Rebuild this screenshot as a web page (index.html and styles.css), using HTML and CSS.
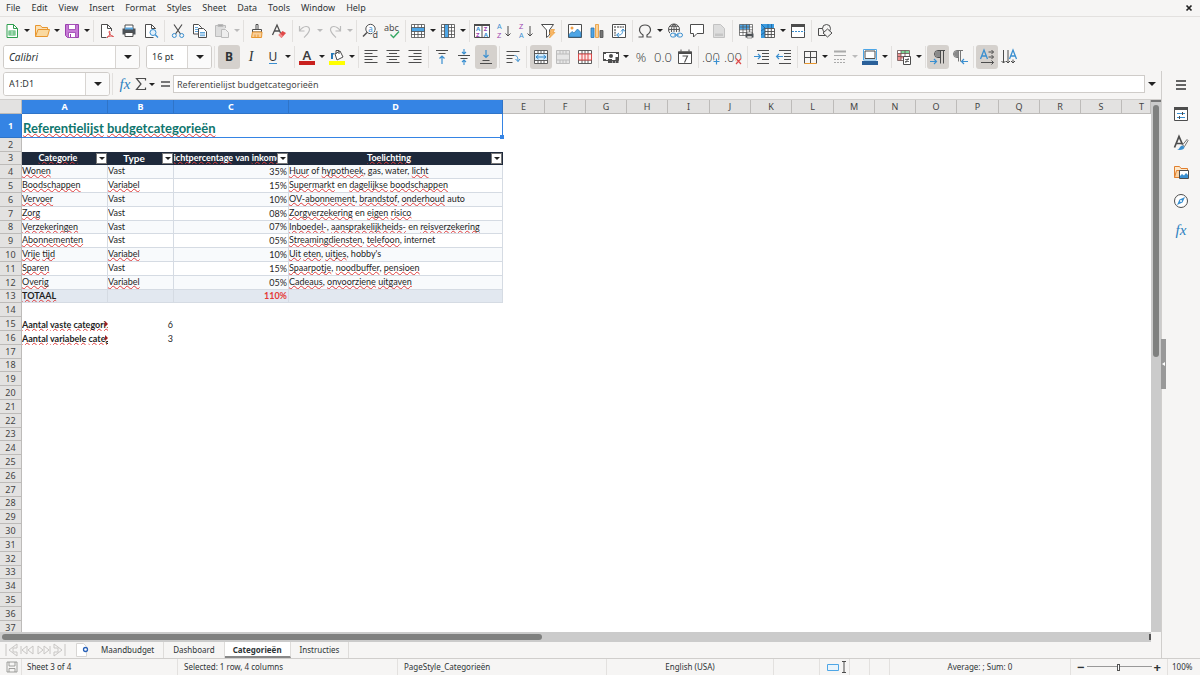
FILE: index.html
```html
<!DOCTYPE html>
<html lang="nl">
<head>
<meta charset="utf-8">
<title>Categorieën</title>
<link rel="stylesheet" href="styles.css">
</head>
<body>
<header class="menubar">
  <nav class="menus">
    <button>File</button><button>Edit</button><button>View</button><button>Insert</button><button>Format</button><button>Styles</button><button>Sheet</button><button>Data</button><button>Tools</button><button>Window</button><button>Help</button>
  </nav>
  <button class="close" aria-label="Close"><svg viewBox="0 0 8 8" width="8" height="8"><path d="M1.5 1.5l5 5M6.5 1.5l-5 5" stroke="#222" stroke-width="1.7"/></svg></button>
</header>

<div class="toolbar standard" role="toolbar" aria-label="Standard">
  <button class="tb" aria-label="New"><svg viewBox="0 0 16 16"><path d="M3 1.5h6.5l4 4v9H3z" fill="#fff" stroke="#2f9e4f"/><path d="M9.5 1.5v4h4" fill="none" stroke="#2f9e4f"/><path d="M4.500 7.500h7v5h-7z" fill="#3fae60"/><path d="M5 9h6M5 11h6M8 8v4" stroke="#d8f3df" stroke-width=".8"/></svg></button><button class="dd" aria-label="New options"></button>
  <button class="tb" aria-label="Open"><svg viewBox="0 0 16 16"><path d="M1.500 13.500v-11h5l1.500 2h5.500v2" fill="#fbe0b4" stroke="#e8962e"/><path d="M1.500 13.500l2.500-7h11.500l-2 7z" fill="#fad9a0" stroke="#e8962e"/></svg></button><button class="dd" aria-label="Open options"></button>
  <button class="tb" aria-label="Save"><svg viewBox="0 0 16 16"><path d="M1.500 1.500h13v13h-11l-2-2z" fill="#c77bd6" stroke="#9a3fae"/><path d="M4.500 1.500h7v5h-7zM4.500 14.500v-5h7v5z" fill="#fff" stroke="#9a3fae" stroke-width=".8"/><path d="M6.500 11v3" stroke="#9a3fae"/></svg></button><button class="dd" aria-label="Save options"></button>
  <i class="sep"></i>
  <button class="tb" aria-label="Export PDF"><svg viewBox="0 0 16 16"><path d="M12.500 8V5.500l-4-4h-6v13h5" fill="#fff" stroke="#4d4d4d"/><path d="M8.500 1.500v4h4" fill="none" stroke="#4d4d4d"/><path d="M8 14.500c3-2 3.500-5 2.500-6.500-1.500 1 1 5 4 5.500-2-1-5-.5-6.500 1z" fill="none" stroke="#dc4a4a"/></svg></button>
  <button class="tb" aria-label="Print"><svg viewBox="0 0 16 16"><path d="M4 6V2h8v4" fill="#fff" stroke="#4d4d4d"/><path d="M1.500 5.500h13v6h-13z" fill="#4d5358"/><path d="M4 4.500h8v2H4z" fill="#5aa7df"/><path d="M4 9.500h8v4H4z" fill="#fff" stroke="#4d4d4d"/></svg></button>
  <button class="tb" aria-label="Print preview"><svg viewBox="0 0 16 16"><path d="M12.500 6V5.500l-4-4h-6v13h8" fill="#fff" stroke="#4d4d4d"/><path d="M8.500 1.500v4h4" fill="none" stroke="#4d4d4d"/><circle cx="10" cy="9.500" r="3" fill="#e3f1fb" stroke="#3a8fd0"/><path d="M12.300 11.800l2.700 2.700" stroke="#3a8fd0" stroke-width="1.300"/></svg></button>
  <i class="sep"></i>
  <button class="tb" aria-label="Cut"><svg viewBox="0 0 16 16" fill="none"><path d="M4 1.500l6.500 9.500M12 1.500L5.500 11" stroke="#4d4d4d" stroke-width="1.200"/><circle cx="4.300" cy="12.500" r="2" stroke="#3a8fd0"/><circle cx="11.700" cy="12.500" r="2" stroke="#3a8fd0"/></svg></button>
  <button class="tb" aria-label="Copy"><svg viewBox="0 0 16 16" fill="#fff" stroke="#4d4d4d"><path d="M1.500 1.500h5l3 3v6.500h-8z"/><path d="M6.500 5.500h5l3 3v6h-8z"/><path d="M3 4.500h3M3 6.500h3M3 8.500h3M8 9.500h5M8 11h5M8 12.700h5" stroke="#3a8fd0" stroke-width=".8"/></svg></button>
  <button class="tb off" aria-label="Paste"><svg viewBox="0 0 16 16" fill="#ddd" stroke="#bcbcbc"><path d="M7 13.500H1.500v-11h10V5"/><path d="M4 1.500h5v2H4z" fill="#aaa"/><path d="M7.500 6.500h4l3 3v5h-7z" fill="#eee"/></svg></button><button class="dd off" aria-label="Paste options"></button>
  <i class="sep"></i>
  <button class="tb" aria-label="Clone formatting"><svg viewBox="0 0 16 16"><path d="M7 1.500h2v5H7z" fill="#fff" stroke="#4d4d4d"/><path d="M3.500 6.500h9v2.500h-9z" fill="#fff" stroke="#4d4d4d"/><path d="M3.500 9l-1 5.500h10l.5-5.500z" fill="#f9cf9a" stroke="#e8962e"/><path d="M6 14v-2.500M9 14v-2.500" stroke="#e8962e"/></svg></button>
  <button class="tb" aria-label="Clear formatting"><svg viewBox="0 0 16 16"><path d="M1.500 12L6 2l3.500 8M3.500 8h5" fill="none" stroke="#4d4d4d" stroke-width="1.300"/><path d="M7.500 12l4-4 3.500 2-4.500 5z" fill="#e04848"/><path d="M7.500 12l1.500-1.500 3 2.500-1.500 2z" fill="#f08d8d"/></svg></button>
  <i class="sep tight"></i>
  <button class="tb off" aria-label="Undo"><svg viewBox="0 0 16 16" fill="none" stroke="#bcbcbc" stroke-width="1.200"><path d="M2.500 3v5h5M2.500 8c4-6 10-5.500 10-1.500 0 3-2.500 5-5.500 8"/></svg></button><button class="dd off" aria-label="Undo list"></button>
  <button class="tb off" aria-label="Redo"><svg viewBox="0 0 16 16" fill="none" stroke="#bcbcbc" stroke-width="1.200"><path d="M13.500 3v5h-5M13.500 8c-4-6-10-5.500-10-1.500 0 3 2.500 5 5.500 8"/></svg></button><button class="dd off" aria-label="Redo list"></button>
  <i class="sep"></i>
  <button class="tb" aria-label="Find and replace"><svg viewBox="0 0 16 16"><circle cx="8.500" cy="6" r="4.700" fill="#fff" stroke="#4d4d4d"/><path d="M5 9.500L1 13.500" stroke="#4d4d4d" stroke-width="1.500"/><text x="6.200" y="8.500" font-size="8" fill="#3a8fd0">a</text><text x="10.500" y="15" font-size="9" fill="#4d4d4d" stroke="#f6f5f4" stroke-width="2" paint-order="stroke">d</text></svg></button>
  <button class="tb" aria-label="Spelling"><svg viewBox="0 0 16 16"><text x="0" y="8" font-size="9" fill="#4d4d4d">abc</text><path d="M6.500 11.500l3 3 5.500-6" fill="none" stroke="#35a864" stroke-width="1.400"/></svg></button>
  <i class="sep tight"></i>
  <button class="tb" aria-label="Row"><svg viewBox="0 0 16 16"><path d="M1.500 1.500h13v13h-13z" fill="#fff"/><path d="M1 4.500h14v4H1z" fill="#4ea6e6"/><path d="M1.500 1.500h13v13h-13zM1.500 4.500h13M1.500 8.500h13M1.500 11.500h13M4.500 1.500v3M8 1.500v3M11.500 1.500v3M4.500 8.500v6M8 8.500v6M11.500 8.500v6" fill="none" stroke="#4d4d4d" stroke-width=".8"/></svg></button><button class="dd" aria-label="Row options"></button>
  <button class="tb" aria-label="Column"><svg viewBox="0 0 16 16"><path d="M1.500 1.500h13v13h-13z" fill="#fff"/><path d="M4.500 1h4v14h-4z" fill="#4ea6e6"/><path d="M1.500 1.500h13v13h-13zM4.500 1.500v13M8.500 1.500v13M11.500 1.500v13M1.500 4.500h3M1.500 8h3M1.500 11.500h3M8.500 4.500h6M8.500 8h6M8.500 11.500h6" fill="none" stroke="#4d4d4d" stroke-width=".8"/></svg></button><button class="dd" aria-label="Column options"></button>
  <i class="sep tight"></i>
  <button class="tb" aria-label="Sort"><svg viewBox="0 0 16 16"><path d="M.5 1.500h15v13H.5zM8 1.500v13" fill="#fff" stroke="#4d4d4d"/><path d="M0 1h16v2H0z" fill="#4d4d4d"/><g font-size="6" font-weight="700"><text x="2" y="8" fill="#3a8fd0">A</text><text x="2" y="14" fill="#9a3fae">Z</text><text x="9.700" y="8" fill="#9a3fae">Z</text><text x="9.700" y="14" fill="#3a8fd0">A</text></g></svg></button>
  <button class="tb" aria-label="Sort ascending"><svg viewBox="0 0 16 16" class="az"><text x="1" y="6" fill="#3a8fd0">A</text><text x="1" y="15" fill="#9a3fae">Z</text><path d="M12 3v10M9.500 10.500L12 13l2.500-2.500" fill="none" stroke="#4d4d4d"/></svg></button>
  <button class="tb" aria-label="Sort descending"><svg viewBox="0 0 16 16" class="az"><text x="1" y="6" fill="#9a3fae">Z</text><text x="1" y="15" fill="#3a8fd0">A</text><path d="M12 3v10M9.500 10.500L12 13l2.500-2.500" fill="none" stroke="#4d4d4d"/></svg></button>
  <button class="tb" aria-label="AutoFilter"><svg viewBox="0 0 16 16"><path d="M1.500 1.500h12L9.500 7v5l-3 2.500V7z" fill="#fff" stroke="#4d4d4d"/><path d="M11 6.500h3.500l-1.500 3h2L9.500 15l1.500-4.500H9.500z" fill="#f9b868" stroke="#e8962e" stroke-width=".6"/></svg></button>
  <i class="sep"></i>
  <button class="tb" aria-label="Image"><svg viewBox="0 0 16 16"><path d="M1.500 1.500h13v13h-13z" fill="#fff" stroke="#4d4d4d"/><circle cx="5" cy="5" r="1.500" fill="#f0a04a"/><path d="M2 14v-2.500l3-3 2 1.500 3.500-4 3.500 3.500V14z" fill="#4ea6e6" stroke="#2b72ad" stroke-width=".7"/></svg></button>
  <button class="tb" aria-label="Chart"><svg viewBox="0 0 16 16"><path d="M2 5h3v9.500H2z" fill="#4ea6e6" stroke="#2b72ad" stroke-width=".8"/><path d="M6.500 1.500h3v13h-3z" fill="#fad29a" stroke="#e8962e" stroke-width=".8"/><path d="M11 7.500h3v7h-3z" fill="#777" stroke="#4d4d4d" stroke-width=".8"/></svg></button>
  <button class="tb" aria-label="Pivot table"><svg viewBox="0 0 16 16"><path d="M1.500 1.500h13v13h-13z" fill="#fff" stroke="#4d4d4d"/><path d="M3 4h2M6 4h7M4 6v7" stroke="#777" stroke-width="1.500" stroke-dasharray="2 .7"/><path d="M6 12c4 .5 5.500-1 6-5M10 8.500L12 6l2 2.500M8 10l-2.500 2L8 14" fill="none" stroke="#3a8fd0"/></svg></button>
  <i class="sep tight"></i>
  <button class="tb" aria-label="Special character"><svg viewBox="0 0 16 16"><path d="M1.500 14h4.500v-2C0 8 2.500 2 8 2s8 6 2 10v2h4.500" fill="none" stroke="#4d4d4d" stroke-width="1.200"/></svg></button><button class="dd" aria-label="Symbols"></button>
  <button class="tb" aria-label="Hyperlink"><svg viewBox="0 0 16 16" fill="none"><circle cx="7" cy="6.500" r="5.500" stroke="#4d4d4d"/><path d="M1.500 6.500h11M7 1v11M3 3.300h8M4.500 10V6.500C4.500 4 5.500 2 7 1c1.500 1 2.500 3 2.500 5.500V10" stroke="#4d4d4d" stroke-width=".9"/><path d="M3 9h13v6H3z" fill="#f6f5f4"/><rect x="3.500" y="10.200" width="5.500" height="3.800" rx="1.900" stroke="#3a8fd0"/><rect x="10" y="10.200" width="5.500" height="3.800" rx="1.900" stroke="#3a8fd0"/><path d="M7 12h5" stroke="#3a8fd0"/></svg></button>
  <button class="tb" aria-label="Comment"><svg viewBox="0 0 16 16"><path d="M1.500 1.500h13v9H8l-3.500 3.500v-3.500h-3z" fill="#fff" stroke="#4d4d4d"/></svg></button>
  <button class="tb off" aria-label="Headers and footers"><svg viewBox="0 0 16 16"><path d="M2.500 1.500h7l4 4v9h-11z" fill="#ddd" stroke="#c2c2c2"/><path d="M4 10.500h8V13H4z" fill="#c6c6c6"/></svg></button>
  <i class="sep"></i>
  <button class="tb" aria-label="Print area"><svg viewBox="0 0 16 16"><path d="M1.500 1.500h13v12h-13z" fill="#fff"/><path d="M1.500 1.500h10v5h-10z" fill="#4ea6e6"/><path d="M1.500 1.500h13v11h-13zM1.500 4h13M1.500 6.800h13M1.500 9.500h13M5 1.500v11M8.500 1.500v11M11.500 1.500v11" fill="none" stroke="#4d4d4d" stroke-width=".7"/><path d="M7.500 10.500h8v4h-8z" fill="#4d5358"/><path d="M9 9h5v2H9zM9 13h5v2H9z" fill="#fff" stroke="#4d4d4d" stroke-width=".6"/></svg></button>
  <button class="tb" aria-label="Freeze rows and columns"><svg viewBox="0 0 16 16"><path d="M1.500 1.500h13v13h-13z" fill="#fff"/><path d="M1 1h13v4H1zM1 1h4v14H1z" fill="#3a9be0"/><path d="M5 5.500h9.500v9H5zM5 8.500h9.500M5 11.500h9.500M8 5.500v9M11.300 5.500v9" fill="none" stroke="#4d4d4d" stroke-width=".9"/><path d="M1 1l4 4M1 8l4-3M1 12l4-3M8 1v4M11.500 1v4" stroke="#1f5f96" stroke-width=".8"/></svg></button><button class="dd" aria-label="Freeze options"></button>
  <button class="tb" aria-label="Split window"><svg viewBox="0 0 16 16"><path d="M1.500 1.500h13v13h-13z" fill="#fff" stroke="#4d4d4d"/><path d="M1 1h14v3H1z" fill="#4d4d4d"/><path d="M2 8.500h13" stroke="#3a8fd0" stroke-dasharray="2 1"/></svg></button>
  <i class="sep"></i>
  <button class="tb" aria-label="Draw functions"><svg viewBox="0 0 16 16" fill="#f6f5f4" stroke="#4d4d4d"><path d="M1.500 5.500h7v7h-7z"/><circle cx="9.500" cy="5.500" r="4"/><path d="M10.500 6l4.500 4-4.500 4L6 10z"/></svg></button>
</div>

<div class="toolbar formatting" role="toolbar" aria-label="Formatting">
  <div class="combo fontname"><input aria-label="Font name" value="Calibri"><button aria-label="Font list"></button></div>
  <div class="combo fontsize"><input aria-label="Font size" value="16 pt"><button aria-label="Size list"></button></div>
  <i class="sep wide"></i>
  <button class="tb on bold">B</button>
  <button class="tb italic">I</button>
  <button class="tb under" aria-label="Underline"><span>U</span></button><button class="dd" aria-label="Underline styles"></button>
  <i class="sep tight"></i>
  <button class="tb" aria-label="Font colour"><svg viewBox="0 0 16 16"><text x="3.500" y="10.500" font-size="13" fill="#3c3c3c" font-weight="600">A</text><path d="M0 12h16v4H0z" fill="#c9211e"/></svg></button><button class="dd" aria-label="Font colour list"></button>
  <button class="tb" aria-label="Background colour"><svg viewBox="0 0 16 16"><path d="M6 5l5-3 3 6-6 3z" fill="#fff" stroke="#4d4d4d"/><path d="M7 5V1.500h3V5" fill="none" stroke="#4d4d4d"/><path d="M2 10V4h4l-2 2v4z" fill="#2478b8"/><path d="M0 12h16v4H0z" fill="#ffff00"/></svg></button><button class="dd" aria-label="Background colour list"></button>
  <i class="sep tight"></i>
  <button class="tb" aria-label="Align left"><svg viewBox="0 0 16 16"><path d="M1.500 1.500h13M1.500 4.500h8M1.500 7.500h13M1.500 10.500h8M1.500 13.500h13" stroke="#4d4d4d"/></svg></button>
  <button class="tb" aria-label="Centre"><svg viewBox="0 0 16 16"><path d="M1.500 1.500h13M4 4.500h8M1.500 7.500h13M4 10.500h8M1.500 13.500h13" stroke="#4d4d4d"/></svg></button>
  <button class="tb" aria-label="Align right"><svg viewBox="0 0 16 16"><path d="M1.500 1.500h13M6.500 4.500h8M1.500 7.500h13M6.500 10.500h8M1.500 13.500h13" stroke="#4d4d4d"/></svg></button>
  <i class="sep"></i>
  <button class="tb" aria-label="Align top"><svg viewBox="0 0 16 16" fill="none"><path d="M2 1.500h12M4.500 4.500h7" stroke="#4d4d4d"/><path d="M8 15V7M5.500 9.500L8 7l2.500 2.500" stroke="#3a8fd0" stroke-width="1.200"/></svg></button>
  <button class="tb" aria-label="Centre vertically"><svg viewBox="0 0 16 16" fill="none"><path d="M2 6.500h12M4.500 9.500h7" stroke="#4d4d4d"/><path d="M8 0v5M6 3l2 2 2-2M8 16v-5M6 13l2-2 2 2" stroke="#3a8fd0" stroke-width="1.100"/></svg></button>
  <button class="tb on" aria-label="Align bottom"><svg viewBox="0 0 16 16" fill="none"><path d="M4.500 11.500h7M2 14.500h12" stroke="#4d4d4d"/><path d="M8 1v7.500M5.500 6L8 8.500 10.500 6" stroke="#3a8fd0" stroke-width="1.200"/></svg></button>
  <i class="sep"></i>
  <button class="tb" aria-label="Wrap text"><svg viewBox="0 0 16 16" fill="none"><path d="M1.500 2.500h13M1.500 6.500h8M1.500 9.500h6M1.500 13.500h6" stroke="#4d4d4d"/><path d="M9.500 6.500c2.500 0 3.500 1.500 3.500 6M10.500 10l2.500 2.500 2-2.500" stroke="#3a8fd0"/></svg></button>
  <i class="sep wide"></i>
  <button class="tb on" aria-label="Merge and centre"><svg viewBox="0 0 16 16"><path d="M1.500 1.500h13v13h-13z" fill="#fff"/><path d="M1.500 1.500h13v13h-13zM1.500 4.500h13M1.500 11.500h13M5 1.500v3M8 1.500v3M11 1.500v3M5 11.500v3M8 11.500v3M11 11.500v3" fill="none" stroke="#4d4d4d" stroke-width=".9"/><path d="M2 5h12v6H2z" fill="#d5ebfa"/><path d="M3 8h10M5.500 6L3 8l2.500 2M10.500 6L13 8l-2.500 2" fill="none" stroke="#2b86cc"/></svg></button>
  <button class="tb off" aria-label="Merge cells"><svg viewBox="0 0 16 16" fill="#e6e6e6" stroke="#bcbcbc"><path d="M1.500 1.500h13v13h-13zM1.500 5h13M1.500 11h13M5 1.500V5M8 1.500V5M11 1.500V5M5 11v3.500M8 11v3.500M11 11v3.500"/></svg></button>
  <button class="tb" aria-label="Unmerge cells"><svg viewBox="0 0 16 16"><path d="M1.500 1.500h13v13h-13zM1.500 5h13M1.500 11h13M5 1.500V5M8 1.500V5M11 1.500V5M5 11v3.500M8 11v3.500M11 11v3.500" fill="#fff" stroke="#4d4d4d" stroke-width=".9"/><path d="M1.500 5h13v6h-13zM5 5v6M8 5v6M11 5v6" fill="#fdeaea" stroke="#dc4a4a"/></svg></button>
  <i class="sep tight"></i>
  <button class="tb" aria-label="Currency"><svg viewBox="0 0 16 16"><path d="M.5 3.500h15v8H.5z" fill="#fff" stroke="#4d4d4d"/><path d="M0 3h3v2H0zM13 3h3v2h-3zM0 10h3v2H0z" fill="#4d4d4d"/><circle cx="8" cy="7" r="2" fill="#4d4d4d"/><path d="M5 10h4v4H5zM9.500 11h2.500v3H9.500zM12.500 8h3v6h-3z" fill="#4d4d4d"/></svg></button><button class="dd" aria-label="Currency list"></button>
  <button class="tb num">%</button>
  <button class="tb num" aria-label="Number">0.0</button>
  <button class="tb" aria-label="Date"><svg viewBox="0 0 16 16"><path d="M1.500 3h13v11.500h-13z" fill="#fff" stroke="#4d4d4d"/><path d="M1 2.500h14V5H1z" fill="#4d4d4d"/><path d="M4 .5v2M12 .5v2" stroke="#4d4d4d"/><path d="M5.500 7h5l-3 6.500" fill="none" stroke="#4d4d4d" stroke-width="1.100"/></svg></button>
  <i class="sep"></i>
  <button class="tb" aria-label="Add decimal"><svg viewBox="0 0 16 16"><text x="-2" y="13" class="thin">.00</text><path d="M12.500 9.500v6M9.500 12.500h6" stroke="#f6f5f4" stroke-width="3"/><path d="M12.500 9.500v6M9.500 12.500h6" stroke="#3a8fd0" stroke-width="1.200"/></svg></button>
  <button class="tb" aria-label="Delete decimal"><svg viewBox="0 0 16 16"><text x="-2" y="13" class="thin">.00</text><path d="M10 9.500l5 5.500M15 9.500L10 15" stroke="#f6f5f4" stroke-width="3"/><path d="M10 9.500l5 5.500M15 9.500L10 15" stroke="#dc4a4a" stroke-width="1.200"/></svg></button>
  <i class="sep wide"></i>
  <button class="tb" aria-label="Increase indent"><svg viewBox="0 0 16 16" fill="none"><path d="M3 1.500h12M8 4.500h7M8 7.500h7M8 10.500h7M3 14.500h12" stroke="#4d4d4d"/><path d="M0 7.500h6.500M4 5l2.500 2.500L4 10" stroke="#3a8fd0" stroke-width="1.100"/></svg></button>
  <button class="tb" aria-label="Decrease indent"><svg viewBox="0 0 16 16" fill="none"><path d="M3 1.500h12M8 4.500h7M8 7.500h7M8 10.500h7M3 14.500h12" stroke="#4d4d4d"/><path d="M.5 7.500H7M3 5L.5 7.500 3 10" stroke="#3a8fd0" stroke-width="1.100"/></svg></button>
  <i class="sep tight"></i>
  <button class="tb" aria-label="Borders"><svg viewBox="0 0 16 16"><path d="M2.500 2v12.500M14.500 2v12.500M8.500 2v12.500M2 2.500h13M2.500 8.500h12" fill="none" stroke="#4d4d4d"/><path d="M2.500 14.500h12" stroke="#e8962e"/></svg></button><button class="dd" aria-label="Border list"></button>
  <button class="tb off" aria-label="Border style"><svg viewBox="0 0 16 16" stroke="#aaa"><path d="M2 2.500h12" stroke-width="2"/><path d="M2 6.500h12"/><path d="M2 10.500h12M2 13.500h12" stroke-dasharray="2 1"/></svg></button><button class="dd off" aria-label="Border style list"></button>
  <button class="tb" aria-label="Border colour"><svg viewBox="0 0 16 16"><path d="M1.500 .5h13v10.500h-13z" fill="#fff" stroke="#4ea6e6"/><path d="M3 2h10v7.500H3z" fill="#fff" stroke="#4d4d4d"/><path d="M0 12h16v4H0z" fill="#2a6099"/></svg></button><button class="dd" aria-label="Border colour list"></button>
  <i class="sep tight"></i>
  <button class="tb" aria-label="Conditional formatting"><svg viewBox="0 0 16 16"><path d="M1.500 1.500h12v10h-12z" fill="#fff"/><path d="M5 1.500h8v3H5z" fill="#7fd99a"/><path d="M2 4.500h3v7H2zM5 7.500h5v2H5z" fill="#ef8f8f"/><path d="M1.500 1.500h12v10h-12zM1.500 4.500h12M1.500 7.500h12M5 1.500v10M9 1.500v10" fill="none" stroke="#6b5050" stroke-width=".8"/><path d="M7.500 7.500h7v8h-7z" fill="#fff" stroke="#4d4d4d"/><path d="M9 10.500h4M9 12.500h4M12.500 9l-3 5" stroke="#4d4d4d" stroke-width=".8"/></svg></button><button class="dd" aria-label="Conditional list"></button>
  <i class="sep tight"></i>
  <button class="tb on" aria-label="Left-to-right"><svg viewBox="0 0 16 16" fill="none"><path d="M15 1.500H8a3.500 3.500 0 000 7h2M10.500 1.500v13M13.500 1.500v13" stroke="#4d4d4d"/><path d="M10 2H8a3 3 0 000 6h2z" fill="#8a8a8a"/><path d="M0 12.500h6.500M4 10l2.500 2.500L4 15" stroke="#3a8fd0" stroke-width="1.200"/></svg></button>
  <button class="tb" aria-label="Right-to-left"><svg viewBox="0 0 16 16" fill="none"><path d="M11 1.500H5a3.500 3.500 0 000 7h2M6.500 1.500v11M8.500 1.500v11" stroke="#777"/><path d="M6.500 2H5a3 3 0 000 6h1.500z" fill="#8a8a8a"/><path d="M16 12.500h-6M12 10l-2.500 2.500L12 15" stroke="#3a8fd0" stroke-width="1.200"/></svg></button>
  <i class="sep"></i>
  <button class="tb on" aria-label="Horizontal text"><svg viewBox="0 0 16 16" fill="none"><path d="M1.500 10L5 1l3.500 9M2.700 7h4.600" stroke="#3a8fd0" stroke-width="1.300"/><path d="M9.500 3h5M9.500 8h5M12.500 1l2 2-2 2M12.500 6l2 2-2 2M2 13.500h12.500M12.500 11.500l2 2-2 2" stroke="#4d4d4d"/></svg></button>
  <button class="tb" aria-label="Vertical text"><svg viewBox="0 0 16 16" fill="none"><path d="M8.500 10L12 1l3.500 9M9.700 7h4.600" stroke="#3a8fd0" stroke-width="1.300"/><path d="M2.500 1v13M7 1v13M12 10.500V14M.5 12l2 2 2-2M5 12l2 2 2-2M10 12l2 2 2-2" stroke="#4d4d4d"/></svg></button>
</div>

<div class="workspace">
  <main class="document">
    <div class="formulabar">
      <div class="combo namebox"><input aria-label="Name box" value="A1:D1"><button aria-label="Name list"></button></div>
      <i class="sep wide"></i>
      <button class="fb fx" aria-label="Function wizard">fx</button>
      <button class="fb" aria-label="Sum"><svg viewBox="0 0 14 14" width="14" height="14"><path d="M11.500 3.500v-2h-9L7 7l-4.500 5.500h9v-2" fill="none" stroke="#4d4d4d" stroke-width="1.200"/></svg></button><button class="dd" aria-label="Sum options"></button>
      <button class="fb" aria-label="Formula"><svg viewBox="0 0 14 14" width="14" height="14"><path d="M3 5h9M3 9h9" stroke="#4d4d4d" stroke-width="1.600"/></svg></button>
      <input class="formula" aria-label="Formula input" value="Referentielijst budgetcategorieën">
      <button class="expand" aria-label="Expand formula bar"></button>
    </div>
    <div class="sheetwrap">
      <div class="sheet">
        <table class="grid">
          <colgroup><col class="rh"><col class="ca"><col class="cb"><col class="cc"><col class="cd"><col class="w"><col class="n"><col class="n"><col class="n"><col class="w"><col class="n"><col class="n"><col class="w"><col class="n"><col class="n"><col class="n"><col class="w"><col class="n"><col class="n"><col class="n"><col></colgroup>
          <thead><tr><th></th><th class="sel">A</th><th class="sel">B</th><th class="sel">C</th><th class="sel">D</th><th>E</th><th>F</th><th>G</th><th>H</th><th>I</th><th>J</th><th>K</th><th>L</th><th>M</th><th>N</th><th>O</th><th>P</th><th>Q</th><th>R</th><th>S</th><th class="last">T</th></tr></thead>
          <tbody>
            <tr class="title"><th class="sel">1</th><td colspan="4" class="cursor"><span class="sp">Referentielijst</span> <span class="sp">budgetcategorieën</span><i class="handle"></i></td></tr>
            <tr><th>2</th></tr>
            <tr class="head"><th>3</th>
              <td><div class="hc"><span class="sp">Categorie</span><button aria-label="Filter Categorie"></button></div></td>
              <td><div class="hc big"><span>Type</span><button aria-label="Filter Type"></button></div></td>
              <td><div class="hc clip"><span><span class="sp">Richtpercentage</span> van <span class="sp">inkomen</span></span><button aria-label="Filter percentage"></button></div></td>
              <td><div class="hc"><span class="sp">Toelichting</span><button aria-label="Filter Toelichting"></button></div></td></tr>
            <tr class="data alt"><th>4</th><td><span class="sp">Wonen</span></td><td>Vast</td><td class="r">35%</td><td><span class="sp">Huur</span> of <span class="sp">hypotheek</span>, gas, water, <span class="sp">licht</span></td></tr>
            <tr class="data"><th>5</th><td><span class="sp">Boodschappen</span></td><td><span class="sp">Variabel</span></td><td class="r">15%</td><td><span class="sp">Supermarkt</span> en <span class="sp">dagelijkse</span> <span class="sp">boodschappen</span></td></tr>
            <tr class="data alt"><th>6</th><td><span class="sp">Vervoer</span></td><td>Vast</td><td class="r">10%</td><td><span class="sp">OV-abonnement</span>, <span class="sp">brandstof</span>, <span class="sp">onderhoud</span> auto</td></tr>
            <tr class="data"><th>7</th><td><span class="sp">Zorg</span></td><td>Vast</td><td class="r">08%</td><td><span class="sp">Zorgverzekering</span> en <span class="sp">eigen</span> <span class="sp">risico</span></td></tr>
            <tr class="data alt"><th>8</th><td><span class="sp">Verzekeringen</span></td><td>Vast</td><td class="r">07%</td><td><span class="sp">Inboedel-</span>, <span class="sp">aansprakelijkheids-</span> en <span class="sp">reisverzekering</span></td></tr>
            <tr class="data"><th>9</th><td><span class="sp">Abonnementen</span></td><td>Vast</td><td class="r">05%</td><td><span class="sp">Streamingdiensten</span>, <span class="sp">telefoon</span>, internet</td></tr>
            <tr class="data alt"><th>10</th><td><span class="sp">Vrije</span> <span class="sp">tijd</span></td><td><span class="sp">Variabel</span></td><td class="r">10%</td><td><span class="sp">Uit</span> <span class="sp">eten</span>, <span class="sp">uitjes</span>, hobby's</td></tr>
            <tr class="data"><th>11</th><td><span class="sp">Sparen</span></td><td>Vast</td><td class="r">15%</td><td><span class="sp">Spaarpotje</span>, <span class="sp">noodbuffer</span>, <span class="sp">pensioen</span></td></tr>
            <tr class="data alt"><th>12</th><td><span class="sp">Overig</span></td><td><span class="sp">Variabel</span></td><td class="r">05%</td><td><span class="sp">Cadeaus</span>, <span class="sp">onvoorziene</span> <span class="sp">uitgaven</span></td></tr>
            <tr class="data total"><th>13</th><td><span class="sp">TOTAAL</span></td><td></td><td class="r">110%</td><td></td></tr>
            <tr><th>14</th></tr>
            <tr class="sum"><th>15</th><td class="more"><span class="sp">Aantal</span> <span class="sp">vaste</span> <span class="sp">categorieën</span></td><td class="r">6</td></tr>
            <tr class="sum"><th>16</th><td class="more"><span class="sp">Aantal</span> <span class="sp">variabele</span> <span class="sp">categorieën</span></td><td class="r">3</td></tr>
            <tr><th>17</th></tr><tr><th>18</th></tr><tr><th>19</th></tr><tr><th>20</th></tr><tr><th>21</th></tr><tr><th>22</th></tr><tr><th>23</th></tr><tr><th>24</th></tr><tr><th>25</th></tr><tr><th>26</th></tr><tr><th>27</th></tr><tr><th>28</th></tr><tr><th>29</th></tr><tr><th>30</th></tr><tr><th>31</th></tr><tr><th>32</th></tr><tr><th>33</th></tr><tr><th>34</th></tr><tr><th>35</th></tr><tr><th>36</th></tr><tr><th>37</th></tr>
          </tbody>
        </table>
      </div>
      <div class="vscroll"><div class="thumb"></div></div>
    </div>
    <div class="hscroll"><div class="thumb"></div><i class="tick"></i></div>
    <nav class="tabs">
      <svg class="tabnav" viewBox="0 0 62 14" width="62" height="14" fill="none" stroke="#c8c6c4"><path d="M1 1v12M12 1L4 7l8 6V9H8V5h4zM16 3v8M22 3l-5 4 5 4zM28 3l-5 4 5 4zM33 3l5 4-5 4zM39 3l5 4-5 4zM45 3v8M49 1l8 6-8 6V9h4V5h-4zM60 1v12"/></svg>
      <button class="addtab" aria-label="Add sheet"><svg viewBox="0 0 14 16" width="14" height="16"><path d="M1.500 1.500h7l3 3v10h-10z" fill="#fff" stroke="#d8d6d4"/><circle cx="10.500" cy="7.500" r="2" fill="#fff" stroke="#2a62b8" stroke-width="1.300"/></svg></button>
      <button class="tab">Maandbudget</button><button class="tab">Dashboard</button><button class="tab active">Categorieën</button><button class="tab">Instructies</button>
    </nav>
  </main>
  <aside class="sidebar">
    <button class="grip" aria-label="Hide sidebar"></button>
    <button aria-label="Settings"><svg viewBox="0 0 16 16"><path d="M3 4h10M3 8h10M3 12h10" stroke="#333" stroke-width="1.500"/></svg></button>
    <button aria-label="Properties"><svg viewBox="0 0 16 16"><path d="M1.500 1.500h13v13h-13z" fill="#fff" stroke="#4d4d4d"/><path d="M1 1h14v3H1z" fill="#4d4d4d"/><path d="M4 7.500h8M4 11.500h8" stroke="#3a8fd0"/><path d="M9.500 6v3M6.500 10v3" stroke="#4d4d4d"/></svg></button>
    <button aria-label="Styles"><svg viewBox="0 0 16 16"><path d="M1.500 12.500L6 1.500l3.500 8M3 8.500h5.500" fill="none" stroke="#4d4d4d" stroke-width="1.700"/><path d="M9.500 10L14 4.500l1 1-3.500 6z" fill="#fff" stroke="#4d4d4d" stroke-width=".8"/><path d="M4 14.500c3 0 2.500-4 5.500-4l2 1.500c0 2.500-4 3.500-7.500 2.500z" fill="#3a8fd0"/></svg></button>
    <button aria-label="Gallery"><svg viewBox="0 0 16 16"><path d="M1.500 13.500v-11h5l1.500 2h6.500V7" fill="#fde8cb" stroke="#e07f2e"/><path d="M1.500 13.500l2-7h4v7z" fill="#fbd3a4" stroke="#e07f2e"/><path d="M6.500 6.500h9v8h-9z" fill="#fff" stroke="#4d4d4d"/><path d="M7 14v-2l2-2 2 1.500 2-2.500 2 2v3z" fill="#3a8fd0"/></svg></button>
    <button aria-label="Navigator"><svg viewBox="0 0 16 16"><circle cx="8" cy="8" r="6.500" fill="#fff" stroke="#4d4d4d"/><path d="M12 4l-2.500 5.500L4 12l2.500-5.500z" fill="#3a8fd0"/><circle cx="8" cy="8" r="1" fill="#fff"/></svg></button>
    <button class="fx" aria-label="Functions">fx</button>
  </aside>
</div>

<footer class="status">
  <span class="s1"><svg viewBox="0 0 12 12" width="12" height="12" fill="none" stroke="#8c8a88" stroke-width=".8"><path d="M1 1h10v10H1zM3 1v4h6V1M3 11V7.500h6V11"/></svg></span>
  <span class="s2">Sheet 3 of 4</span><span class="s3">Selected: 1 row, 4 columns</span><span class="s4">PageStyle_Categorieën</span><span class="s5">English (USA)</span><span class="s6"></span>
  <span class="s7"><svg viewBox="0 0 22 12" width="22" height="12"><path d="M1.500 3.500h11v6h-11z" fill="#e9f4fc" stroke="#4ea6e6"/><path d="M16 .5h4M16 11.500h4M18 .5v11" stroke="#4d4d4d"/></svg></span>
  <span class="s8"></span><span class="s8"></span><span class="s9">Average: ; Sum: 0</span>
  <span class="s10"><button aria-label="Zoom out">−</button><input type="range" aria-label="Zoom" min="0" max="100" value="49"><button aria-label="Zoom in">+</button></span>
  <span class="s11">100%</span>
</footer>
</body>
</html>
```

FILE: styles.css
```css
* { box-sizing: border-box; }
body { margin: 0; height: 100vh; display: flex; flex-direction: column; overflow: hidden; background: #f6f5f4; color: #2e3436; font: 9px/12px "Noto Sans", sans-serif; }
button { margin: 0; padding: 0; border: 0; background: none; color: inherit; font: inherit; }
input { margin: 0; border: 0; color: inherit; font: inherit; min-width: 0; outline: 0; }
svg { display: block; overflow: visible; }

.menubar { display: flex; align-items: center; height: 17px; border-bottom: 1px solid #e3e1df; flex: none; }
.menus { display: flex; gap: 11px; padding-left: 6px; flex: 1; }
.close { padding-right: 7px; }

.toolbar { display: flex; align-items: center; flex: none; }
.standard { height: 27px; padding-left: 1px; }
.formatting { height: 27px; padding: 0 0 2px 3px; }
.tb { width: 22px; height: 24px; display: grid; place-items: center; border-radius: 3px; flex: none; }
.tb svg { width: 16px; height: 16px; }
.tb.on { background: #d5d1cd; }
.tb.bold { font-size: 12px; font-weight: 700; }
.tb.italic { font: italic 14px "Liberation Serif", serif; }
.tb.under { font-size: 12px; color: #333; }
.tb.under span { line-height: 13px; border-bottom: 1px solid #3a8fd0; }
.tb.num { font: 300 13px/16px "Open Sans", sans-serif; color: #333; }
.thin { font: 300 13px "Open Sans", sans-serif; fill: #333; }
.az text { font: 7px "Liberation Sans", sans-serif; }
.dd { width: 8px; height: 24px; display: grid; place-items: center; flex: none; }
.dd::before, .combo button::before, .expand::before { content: ""; border: 3px solid transparent; border-top: 3px solid #222; border-bottom: 0; }
.dd.off::before { border-top-color: #bbb; }
.sep { width: 5px; height: 22px; flex: none; background: linear-gradient(#e2e0de, #e2e0de) 2px 0 / 1px 100% no-repeat; }
.sep.tight { width: 4px; }
.sep.wide { width: 6px; }

.combo { display: flex; height: 24px; border: 1px solid #cfccc9; border-radius: 3px; background: #fff; overflow: hidden; flex: none; }
.combo input { flex: 1; padding: 0 5px; background: #fff; }
.combo button { width: 24px; border-left: 1px solid #d8d5d2; display: grid; place-items: center; background: #fafafa; }
.combo button::before { border-width: 4px; border-top-width: 4px; border-bottom-width: 0; }
.fontname { width: 137px; margin-right: 6px; }
.fontname input { font-style: italic; font-size: 10px; }
.fontsize { width: 66px; }

.workspace { display: flex; flex: 1; min-height: 0; }
.document { flex: 1; min-width: 0; display: flex; flex-direction: column; }
.formulabar { display: flex; align-items: center; height: 29px; padding: 0 2px 2px 3px; flex: none; border-bottom: 1px solid #d0cecc; }
.namebox { width: 107px; height: 24px; }
.fb { width: 14px; height: 20px; display: grid; place-items: center; margin-left: 2px; }
.fx { font: italic 15px/16px "Liberation Serif", serif; color: #2b7fc0; }
.formula { flex: 1; height: 18px; border: 1px solid #cfccc9; background: #fff; margin-left: 1px; padding: 0 3px; color: #4a4a4a; }
.expand { width: 14px; display: grid; place-items: center; }
.expand::before { border-width: 4px; border-top-width: 4px; border-bottom-width: 0; }

.sheetwrap { flex: 1; min-height: 0; display: flex; }
.sheet { flex: 1; min-width: 0; overflow: hidden; background: #fff; }
.vscroll { width: 10px; background: #cbcbcb; border-top: 2px solid #777; padding: 3px 2px; }
.vscroll .thumb { height: 48%; border-radius: 3px; background: #7f807f; }
.hscroll { height: 10px; margin-right: 10px; background: #cbcbcb; padding: 2px 0 2px 2px; display: flex; justify-content: space-between; flex: none; }
.hscroll .thumb { width: 47%; border-radius: 3px; background: #7f807f; }
.hscroll .tick { width: 2px; background: #555; }

.grid { table-layout: fixed; width: 100%; border-collapse: separate; border-spacing: 0; font: 9px/12px Lato, sans-serif; color: #1f1f1f; }
.rh { width: 22px; } .ca { width: 86px; } .cb { width: 66px; } .cc { width: 115px; } .cd { width: 214px; } .n { width: 41px; } .w { width: 42px; }
.grid th { padding: 0; background: #e3e2e1; border: 0 solid #bdbbb9; border-width: 0 1px 1px 0; font: 9px/12px "Noto Sans", sans-serif; color: #444; }
.grid thead th { height: 14px; }
.grid thead .last { text-align: left; padding-left: 17px; }
.grid .sel { background: #3584e4; border-color: #2f74c8; color: #fff; font-weight: 700; }
.grid tbody tr { height: 14px; }
.grid tbody tr:nth-child(5n+3) { height: 13px; }
.grid tbody .title { height: 24px; }
.grid td { padding: 0; white-space: nowrap; overflow: hidden; vertical-align: top; }
.grid .title td { position: relative; overflow: visible; border: 1px solid #3584e4; border-width: 0 1px 1px 0; font-size: 13px; line-height: 17px; font-weight: 700; color: #0f766e; vertical-align: bottom; padding-left: 1px; }
.handle { position: absolute; right: -2px; bottom: -2px; width: 4px; height: 4px; background: #3584e4; }
.sp { text-decoration: underline wavy #e03c3c 1px; text-decoration-skip-ink: none; text-underline-offset: 0; }
.head td { background: #1e293b; color: #fff; font-weight: 700; }
.hc { display: flex; justify-content: center; position: relative; padding-right: 14px; overflow: hidden; }
.hc.big { font-size: 10px; }
.hc.clip { padding-right: 9px; }
.hc button { position: absolute; right: 1px; top: 1px; width: 11px; height: 11px; background: #fff; border: 1px solid #777; display: grid; place-items: center; }
.hc.clip button { box-shadow: 2px 0 #1e293b; }
.hc button::before { content: ""; border: 3px solid transparent; border-top-color: #222; border-bottom: 0; }
.data td { border: 0 solid #d5dbe3; border-width: 0 1px 1px 0; }
.alt td { background: #f8fafc; }
.grid .r { text-align: right; vertical-align: bottom; padding-right: 1px; }
.total td { background: #e2e8f0; font-weight: 700; }
.total .r { color: #e53935; }
.grid .sum td { vertical-align: bottom; }
.sum td:first-of-type { font-weight: 700; }
.more { position: relative; }
.more::after { content: ""; position: absolute; right: 0; top: 4px; border: 3px solid transparent; border-left-color: #a02020; border-right: 0; background: #fff; }

.tabs { height: 16px; display: flex; align-items: stretch; font-size: 8px; flex: none; }
.tabnav { margin: 1px 8px 0 5px; }
.addtab { margin-right: 3px; }
.tab { padding: 0 9px; border-right: 1px solid #dedcda; }
.tab.active { background: #fff; font-weight: 700; border-bottom: 2px solid #888; padding: 2px 8px 0; }

.sidebar { width: 39px; border-left: 1px solid #d0cecc; display: flex; flex-direction: column; align-items: center; gap: 13px; padding-top: 6px; position: relative; flex: none; }
.sidebar button { height: 16px; }
.sidebar svg { width: 16px; height: 16px; }
.sidebar .grip { position: absolute; left: -1px; top: 268px; width: 5px; height: 50px; background: #999; display: grid; place-items: center; }
.grip::before { content: ""; border: 2px solid transparent; border-right: 3px solid #fff; border-left: 0; }

.status { height: 17px; display: flex; align-items: stretch; border-top: 1px solid #d0cecc; font-size: 8px; line-height: 16px; flex: none; }
.status span { border-right: 1px solid #e3e1df; padding: 0 6px; white-space: nowrap; }
.s1 { width: 22px; display: grid; place-items: center; }
.status .s2 { flex: 144 1 0; padding-left: 5px; }
.s3 { flex: 207 1 0; } .s4 { flex: 196 1 0; } .s5 { flex: 154 1 0; text-align: center; } .s6 { flex: 33 1 0; }
.s7 { width: 30px; display: grid; place-items: center; } .s8 { width: 20px; }
.s9 { flex: 168 1 0; text-align: center; }
.status .s10 { width: 97px; display: flex; align-items: center; gap: 2px; font-size: 13px; font-weight: 700; }
.s10 input { appearance: none; flex: 1; height: 12px; background: linear-gradient(#999, #999) 0 5px / 100% 1px no-repeat; }
.s10 input::-webkit-slider-thumb { appearance: none; width: 3px; height: 7px; border: 1px solid #555; background: #fff; }
.status .s11 { width: 32px; padding-left: 4px; border: 0; }
```
